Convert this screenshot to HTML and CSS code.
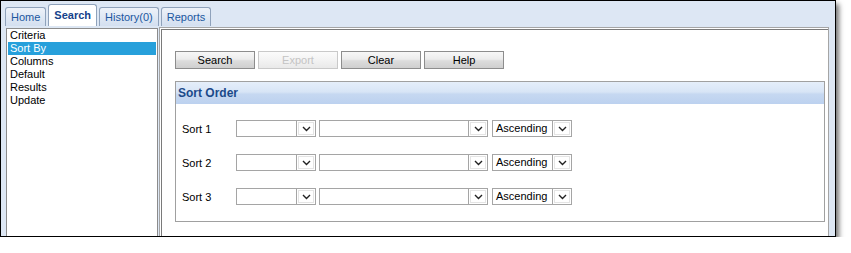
FILE: index.html
```html
<!doctype html>
<html lang="en">
<head>
    <meta charset="utf-8">
    <title>Search - Sort By</title>
    <link rel="stylesheet" href="styles.css">
</head>
<body>
<div class="window">
    <div class="tabs">
        <span class="tab">Home</span>
        <span class="tab active">Search</span>
        <span class="tab">History(0)</span>
        <span class="tab">Reports</span>
    </div>

    <div class="main">
        <ul class="nav-list">
            <li>Criteria</li>
            <li class="selected">Sort By</li>
            <li>Columns</li>
            <li>Default</li>
            <li>Results</li>
            <li>Update</li>
        </ul>

        <div class="content">
            <div class="toolbar">
                <button type="button" class="btn">Search</button>
                <button type="button" class="btn" disabled>Export</button>
                <button type="button" class="btn">Clear</button>
                <button type="button" class="btn">Help</button>
            </div>

            <div class="group">
                <div class="group-title">Sort Order</div>
                <div class="sort-rows">
                    <div class="sort-row">
                        <span class="sort-label">Sort 1</span>
                        <span class="select sel-table"><span class="select-value"></span><span class="select-arrow"><svg width="9" height="6" viewBox="0 0 9 6"><path d="M1 1 L4.5 4.5 L8 1" fill="none" stroke="#222" stroke-width="1.4"/></svg></span></span>
                        <span class="select sel-field"><span class="select-value"></span><span class="select-arrow"><svg width="9" height="6" viewBox="0 0 9 6"><path d="M1 1 L4.5 4.5 L8 1" fill="none" stroke="#222" stroke-width="1.4"/></svg></span></span>
                        <span class="select sel-dir"><span class="select-value">Ascending</span><span class="select-arrow"><svg width="9" height="6" viewBox="0 0 9 6"><path d="M1 1 L4.5 4.5 L8 1" fill="none" stroke="#222" stroke-width="1.4"/></svg></span></span>
                    </div>
                    <div class="sort-row">
                        <span class="sort-label">Sort 2</span>
                        <span class="select sel-table"><span class="select-value"></span><span class="select-arrow"><svg width="9" height="6" viewBox="0 0 9 6"><path d="M1 1 L4.5 4.5 L8 1" fill="none" stroke="#222" stroke-width="1.4"/></svg></span></span>
                        <span class="select sel-field"><span class="select-value"></span><span class="select-arrow"><svg width="9" height="6" viewBox="0 0 9 6"><path d="M1 1 L4.5 4.5 L8 1" fill="none" stroke="#222" stroke-width="1.4"/></svg></span></span>
                        <span class="select sel-dir"><span class="select-value">Ascending</span><span class="select-arrow"><svg width="9" height="6" viewBox="0 0 9 6"><path d="M1 1 L4.5 4.5 L8 1" fill="none" stroke="#222" stroke-width="1.4"/></svg></span></span>
                    </div>
                    <div class="sort-row">
                        <span class="sort-label">Sort 3</span>
                        <span class="select sel-table"><span class="select-value"></span><span class="select-arrow"><svg width="9" height="6" viewBox="0 0 9 6"><path d="M1 1 L4.5 4.5 L8 1" fill="none" stroke="#222" stroke-width="1.4"/></svg></span></span>
                        <span class="select sel-field"><span class="select-value"></span><span class="select-arrow"><svg width="9" height="6" viewBox="0 0 9 6"><path d="M1 1 L4.5 4.5 L8 1" fill="none" stroke="#222" stroke-width="1.4"/></svg></span></span>
                        <span class="select sel-dir"><span class="select-value">Ascending</span><span class="select-arrow"><svg width="9" height="6" viewBox="0 0 9 6"><path d="M1 1 L4.5 4.5 L8 1" fill="none" stroke="#222" stroke-width="1.4"/></svg></span></span>
                    </div>
                </div>
            </div>
        </div>
    </div>
</div>
</body>
</html>
```

FILE: styles.css
```css
body {
    margin: 0;
    background-color: #fff;
    font-family: "Liberation Sans", Arial, sans-serif;
    font-size: 11px;
    color: #000;
}
.window {
    box-sizing: border-box;
    width: 836px;
    height: 237px;
    border: 1px solid #000;
    background-color: #dde7f4;
    box-shadow: 3px 4px 5px rgba(0, 0, 0, 0.55);
    overflow: hidden;
}

/* tab strip */
.tabs {
    display: flex;
    align-items: flex-end;
    gap: 2px;
    height: 25px;
    padding-left: 4px;
}
.tab {
    height: 18px;
    padding: 0 5px;
    border: 1px solid #8fa2bb;
    border-bottom: none;
    border-radius: 3px 3px 0 0;
    background: linear-gradient(#edf2f9, #d3dff0);
    color: #1c57a0;
    line-height: 18px;
}
.tab.active {
    height: 21px;
    background: #fff;
    color: #15428b;
    font-weight: bold;
    line-height: 21px;
}

/* panels */
.main {
    display: flex;
    gap: 1px;
    padding: 2px 0 0 5px;
}
.nav-list {
    box-sizing: border-box;
    width: 152px;
    height: 220px;
    margin: 0;
    padding: 0 1px;
    list-style: none;
    border: 1px solid #8c8c8c;
    background-color: #fff;
}
.nav-list li {
    height: 13px;
    padding-left: 2px;
    line-height: 13px;
}
.nav-list li.selected {
    background-color: #27a0db;
    color: #fff;
}
.content {
    box-sizing: border-box;
    width: 670px;
    height: 220px;
    margin-top: -1px;
    padding: 23px 0 0 15px;
    border: 1px solid #a5a5a5;
    background-color: #fff;
    box-shadow: inset 1px 1px 0 #fff, inset 2px 2px 0 #7a7a7a;
}

/* buttons */
.toolbar {
    display: flex;
    gap: 3px;
}
.btn {
    box-sizing: border-box;
    width: 80px;
    height: 18px;
    padding: 0;
    border: 1px solid #8d8d8d;
    background: linear-gradient(#f7f7f7 0%, #ececec 45%, #dcdcdc 55%, #cfcfcf 100%);
    font-family: inherit;
    font-size: 11px;
    color: #000;
}
.btn:disabled {
    border-color: #c9c9c9;
    background: linear-gradient(#fbfbfb 0%, #f3f3f3 50%, #e9e9e9 100%);
    color: #c4c4c4;
}

/* sort order group */
.group {
    width: 650px;
    box-sizing: border-box;
    margin-top: 12px;
    border: 1px solid #a0a0a0;
}
.group-title {
    height: 22px;
    padding-left: 2px;
    background: linear-gradient(#e5eefa 0%, #d8e5f6 45%, #c6d8f1 55%, #bcd1ef 100%);
    color: #1b4a8a;
    font-size: 12px;
    font-weight: bold;
    line-height: 22px;
}
.sort-rows {
    display: flex;
    flex-direction: column;
    gap: 17px;
    padding: 16px 6px;
}
.sort-row {
    display: flex;
    align-items: center;
    height: 17px;
}
.sort-label {
    width: 54px;
}
.select {
    box-sizing: border-box;
    display: flex;
    height: 17px;
    border: 1px solid #a5a5a5;
    background-color: #fff;
}
.sel-table {
    width: 80px;
    margin-right: 3px;
}
.sel-field {
    width: 169px;
    margin-right: 4px;
}
.sel-dir {
    width: 80px;
}
.select-value {
    flex: 1;
    padding-left: 3px;
    line-height: 15px;
}
.select-arrow {
    box-sizing: border-box;
    display: flex;
    align-items: center;
    justify-content: center;
    width: 19px;
    height: 15px;
    border-left: 1px solid #a5a5a5;
    box-shadow: inset 0 0 0 1px #fff, inset 0 0 0 2px #e4e4e4;
}
```
